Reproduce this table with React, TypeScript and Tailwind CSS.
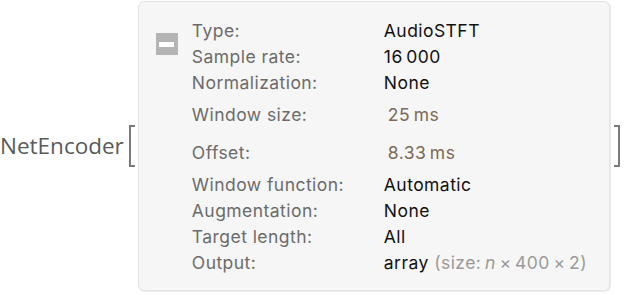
import React from "react";

const rows: { label: string; value: React.ReactNode; h: string }[] = [
  { label: "Type:", value: "AudioSTFT", h: "h-[26px]" },
  { label: "Sample rate:", value: "16\u2009000", h: "h-[26px]" },
  { label: "Normalization:", value: "None", h: "h-[26px]" },
  {
    label: "Window size:",
    value: <span className="ml-[4px] text-[#7d6a55]">25&#8201;ms</span>,
    h: "h-[38px]",
  },
  {
    label: "Offset:",
    value: <span className="ml-[4px] text-[#7d6a55]">8.33&#8201;ms</span>,
    h: "h-[38px]",
  },
  { label: "Window function:", value: "Automatic", h: "h-[26px]" },
  { label: "Augmentation:", value: "None", h: "h-[26px]" },
  { label: "Target length:", value: "All", h: "h-[26px]" },
  {
    label: "Output:",
    value: (
      <span>
        array{" "}
        <span className="text-[#9a9a9a]">
          (size:&#8201;<i>n</i>&#8201;×&#8201;400&#8201;×&#8201;2)
        </span>
      </span>
    ),
    h: "h-[26px]",
  },
];

function LeftBracket() {
  return (
    <svg width="8" height="42" viewBox="0 0 8 42" className="block">
      <path d="M7 1 H2 V41 H7" fill="none" stroke="#7a7a7a" strokeWidth="2" />
    </svg>
  );
}

function RightBracket() {
  return (
    <svg width="8" height="42" viewBox="0 0 8 42" className="block">
      <path d="M1 1 H6 V41 H1" fill="none" stroke="#7a7a7a" strokeWidth="2" />
    </svg>
  );
}

export default function App() {
  return (
    <div className="flex h-[295px] w-[625px] items-start bg-white">
      <div className="flex h-[293px] items-center">
        <span
          className="text-[22.5px] leading-none text-[#5a5a5a]"
          style={{ fontFamily: '"Open Sans", sans-serif' }}
        >
          NetEncoder
        </span>
        <div className="ml-[4px] mt-[-1px]">
          <LeftBracket />
        </div>
      </div>
      <div
        className="ml-[2px] mt-[1px] flex h-[290px] w-[472px] rounded-[6px] border border-[#e3e3e3] bg-[#f6f6f6] shadow-[1px_1px_1px_rgba(0,0,0,0.08)]"
        style={{ fontFamily: 'Inter, "Liberation Sans", sans-serif' }}
      >
        <div className="ml-[17px] mt-[31px] flex h-[22px] w-[22px] items-center justify-center bg-[#b4b4b4]">
          <div className="h-[5px] w-[15px] bg-white" />
        </div>
        <div className="ml-[14px] mt-[16px] flex flex-col text-[17.5px] leading-none tracking-[0.45px]">
          {rows.map((r) => (
            <div key={r.label} className={`flex items-center ${r.h}`}>
              <div className="w-[192px] text-[#6b6b6b]">{r.label}</div>
              <div className="text-[#111]">{r.value}</div>
            </div>
          ))}
        </div>
      </div>
      <div className="ml-[3px] flex h-[293px] items-center">
        <div className="mt-[-1px]">
          <RightBracket />
        </div>
      </div>
    </div>
  );
}
